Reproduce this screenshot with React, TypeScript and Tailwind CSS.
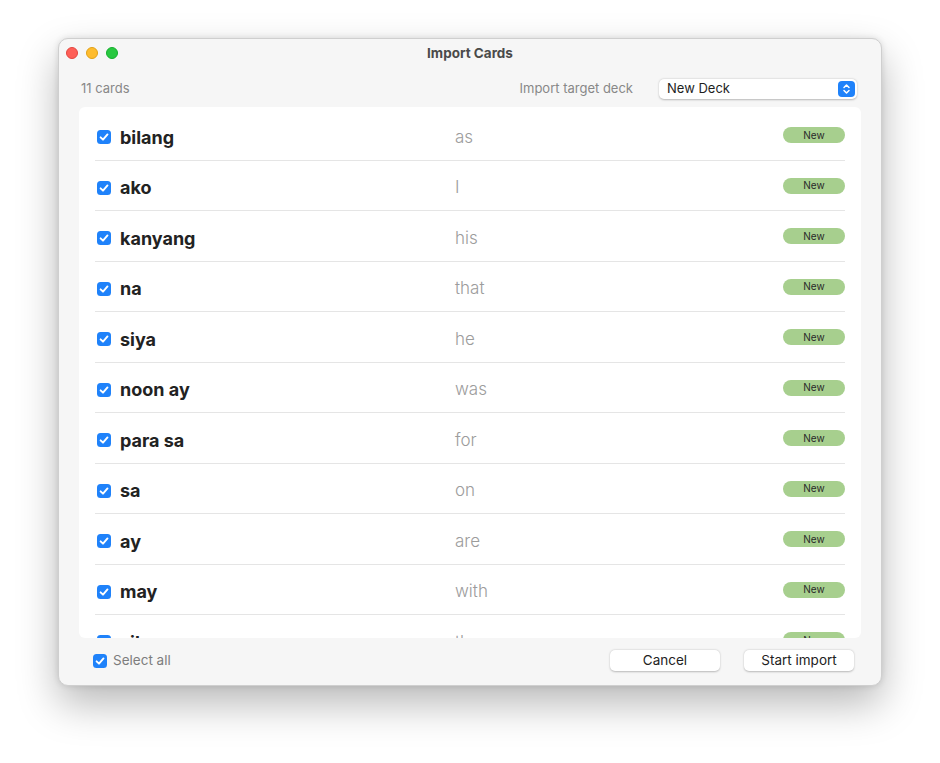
import React from "react";

const rows: [string, string][] = [
  ["bilang", "as"],
  ["ako", "I"],
  ["kanyang", "his"],
  ["na", "that"],
  ["siya", "he"],
  ["noon ay", "was"],
  ["para sa", "for"],
  ["sa", "on"],
  ["ay", "are"],
  ["may", "with"],
  ["sila", "they"],
];

function Check({ size = 14 }: { size?: number }) {
  return (
    <svg width={size} height={size} viewBox="0 0 14 14" className="shrink-0">
      <rect x="0" y="0" width="14" height="14" rx="3.5" fill="#1f82fa" />
      <path d="M3.6 7.3 L6 9.7 L10.5 4.4" fill="none" stroke="#fff" strokeWidth="1.9" strokeLinecap="round" strokeLinejoin="round" />
    </svg>
  );
}

export default function App() {
  return (
    <div
      className="w-[940px] h-[763px] bg-white pl-[58px] pt-[38px]"
      style={{ fontFamily: "Inter, 'Liberation Sans', sans-serif" }}
    >
      <div className="w-[824px] h-[648px] rounded-[10px] bg-[#f6f6f6] border border-[#cfcfcf] shadow-[0_18px_40px_rgba(0,0,0,0.28),0_0_6px_rgba(0,0,0,0.12)] flex flex-col overflow-hidden">
        {/* title bar */}
        <div className="h-[28px] relative flex items-center pl-[7px] shrink-0">
          <div className="flex gap-[8px]">
            <div className="w-[12px] h-[12px] rounded-full bg-[#fe5f57] border border-[#e2463f]" />
            <div className="w-[12px] h-[12px] rounded-full bg-[#febc2e] border border-[#e1a116]" />
            <div className="w-[12px] h-[12px] rounded-full bg-[#28c840] border border-[#14ae2c]" />
          </div>
          <div className="absolute inset-0 flex items-center justify-center text-[13.5px] font-bold text-[#4a4a4a]">
            Import Cards
          </div>
        </div>
        {/* header */}
        <div className="h-[40px] flex items-center pl-[22px] pr-[24px] pt-[4px] shrink-0">
          <div className="text-[13px] text-[#888888]">11 cards</div>
          <div className="flex-1" />
          <div className="text-[13px] text-[#888888] mr-[26px]">Import target deck</div>
          <div className="w-[198px] h-[20px] bg-white rounded-[5px] shadow-[0_0.5px_2px_rgba(0,0,0,0.25)] flex items-center pl-[8px] pr-[2px]">
            <span className="text-[13px] text-[#1e1e1e] flex-1">New Deck</span>
            <div className="w-[17px] h-[16px] rounded-[4px] bg-[#1f82fa] flex items-center justify-center">
              <svg width="9" height="12" viewBox="0 0 9 12">
                <path d="M2 4.5 L4.5 2 L7 4.5 M2 7.5 L4.5 10 L7 7.5" fill="none" stroke="#fff" strokeWidth="1.5" strokeLinecap="round" strokeLinejoin="round" />
              </svg>
            </div>
          </div>
        </div>
        {/* list panel */}
        <div className="ml-[20px] mr-[20px] h-[531px] bg-white rounded-[6px] overflow-hidden pt-[3px] pl-[16px] pr-[16px] shrink-0">
          {rows.map(([w, t]) => (
            <div key={w} className="h-[50.5px] border-b border-[#e5e5e5] flex items-center pt-[5px] shrink-0">
              <div className="ml-[2px]">
                <Check />
              </div>
              <div className="ml-[9px] w-[335px] text-[18px] font-bold text-[#222222]">{w}</div>
              <div className="flex-1 text-[17px] font-light text-[#9c9c9c]">{t}</div>
              <div className="w-[62px] h-[16px] mb-[4px] rounded-full bg-[#a7cf8e] flex items-center justify-center text-[10px] text-[#2a2a2a]">
                New
              </div>
            </div>
          ))}
        </div>
        {/* footer */}
        <div className="flex-1 flex items-center pl-[34px] pr-[27px] pb-[2px]">
          <Check />
          <span className="ml-[6px] text-[13.5px] text-[#7d7d7d]">Select all</span>
          <div className="flex-1" />
          <button className="w-[110px] h-[21px] bg-white rounded-[5px] shadow-[0_0.5px_2px_rgba(0,0,0,0.25)] text-[13.5px] text-[#222222]">
            Cancel
          </button>
          <button className="ml-[24px] w-[110px] h-[21px] bg-white rounded-[5px] shadow-[0_0.5px_2px_rgba(0,0,0,0.25)] text-[13.5px] text-[#222222]">
            Start import
          </button>
        </div>
      </div>
    </div>
  );
}
